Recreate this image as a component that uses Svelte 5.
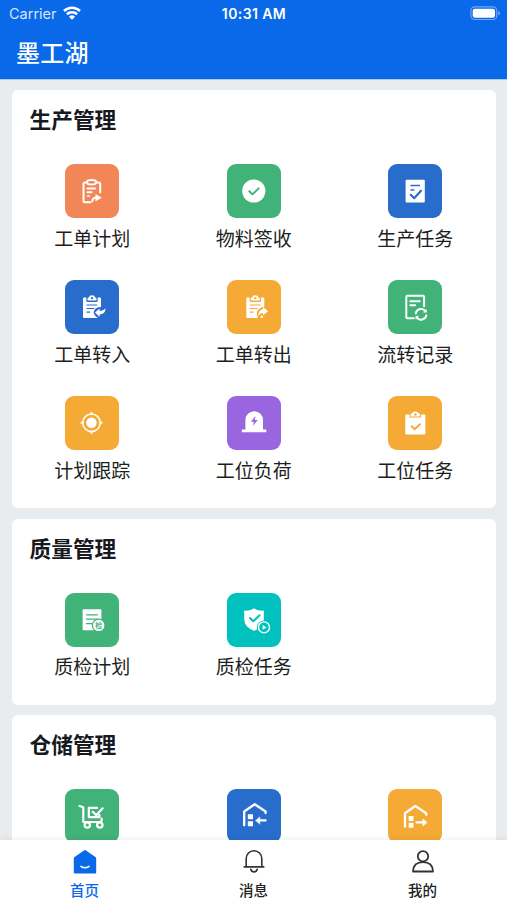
<script>
  const sections = [
    {
      title: '生产管理',
      items: [
        { label: '工单计划', color: '#f38656', icon: 'plan' },
        { label: '物料签收', color: '#42b378', icon: 'check' },
        { label: '生产任务', color: '#286dcb', icon: 'task' },
        { label: '工单转入', color: '#286dcb', icon: 'in' },
        { label: '工单转出', color: '#f5aa35', icon: 'out' },
        { label: '流转记录', color: '#42b378', icon: 'record' },
        { label: '计划跟踪', color: '#f5aa35', icon: 'track' },
        { label: '工位负荷', color: '#9966e0', icon: 'load' },
        { label: '工位任务', color: '#f5aa35', icon: 'station' }
      ]
    },
    {
      title: '质量管理',
      items: [
        { label: '质检计划', color: '#42b378', icon: 'qcplan' },
        { label: '质检任务', color: '#00c1bd', icon: 'qctask' }
      ]
    },
    {
      title: '仓储管理',
      items: [
        { color: '#42b378', icon: 'cart' },
        { color: '#286dcb', icon: 'housein' },
        { color: '#f5aa35', icon: 'houseout' }
      ]
    }
  ];
</script>

{#snippet clipboard(c)}
  <path fill="#fff" stroke="none" d="M19 17.500h2.300v3.200q0 1.200 1.200 1.200h9q1.200 0 1.200-1.200v-3.200H35q1 0 1 1V37q0 1-1 1H19q-1 0-1-1V18.500q0-1 1-1z" />
  <path fill="#fff" stroke="none" d="M22.500 20.500v-1.700q0-1.300 1.300-1.300 .5-2.300 3.200-2.300t3.200 2.300q1.300 0 1.300 1.300v1.700z" />
  <circle cx="27" cy="18.100" r="1.200" fill={c} stroke="none" />
{/snippet}

{#snippet glyph(name, c)}
  <svg viewBox="0 0 54 54" fill="none" stroke="#fff" stroke-width="2" stroke-linecap="round" stroke-linejoin="round">
    {#if name === 'plan'}
      <path d="M21 18.600h-1q-1.500 0-1.500 1.500v16.700q0 1.500 1.500 1.500h5.500M32 18.600h1.700q1.500 0 1.500 1.500v8.400M22.500 24.500h7.500M22.500 28.300h4" />
      <ellipse cx="26.600" cy="18.200" rx="4.700" ry="2.300" />
      <path d="M22.500 32h2" stroke-width="1.500" />
      <path d="M27.300 37.200q.4-3.400 4.200-3.600" />
      <path d="M31 30.700l5.300 3-5.300 3z" fill="#fff" stroke-width=".6" />
    {:else if name === 'check'}
      <circle cx="26.800" cy="27" r="11.600" fill="#fff" stroke="none" />
      <path d="M22.300 27.200l3.200 3.200 6.100-6" stroke={c} />
    {:else if name === 'task'}
      <rect x="17.600" y="15.800" width="19.200" height="22.600" rx="1" fill="#fff" stroke="none" />
      <path d="M23 21.500h8.500M23 26h2.800" stroke={c} stroke-width="1.500" />
      <path d="M22.800 30.800l3.400 3.400 6.800-7.500" stroke={c} stroke-width="2.100" />
    {:else if name === 'in'}
      {@render clipboard(c)}
      <path d="M22 25h9.800M22 28.500h7M22 32.100h2.700" stroke={c} stroke-width="1.200" />
      <path d="M37 27q-7.500-.5-8.400 5.800.8 3 4.600 5.500h4z" fill={c} stroke="none" />
      <path d="M30 32.600l4.600-4v2.400q3.800.2 6-2.800-.2 5.600-6 6.400v2.400z" fill="#fff" stroke="none" />
    {:else if name === 'out'}
      <g transform="translate(1.3)">{@render clipboard(c)}</g>
      <path d="M23.300 25h9.800M23.300 28.500h7M23.300 32.100h2.700" stroke={c} stroke-width="1.200" />
      <path d="M38.500 26.600l-3.500.7q-5.600 2-5 7.200l1 4h7z" fill={c} stroke="none" />
      <path d="M31.300 36q.4-6.800 4.800-6.800v-2.200l5 4.200-5 4.100v-2.200q-2.800-.2-4.800 2.900z" fill="#fff" stroke="none" />
      <circle cx="34.800" cy="36.700" r="1.300" fill="#fff" stroke="none" />
    {:else if name === 'record'}
      <path d="M25.800 38.300h-6.300q-1.200 0-1.200-1.200V17q0-1.200 1.200-1.200h15.400q1.200 0 1.200 1.200v9.300M22.300 21.300h9.300M22.300 25.300h4.800" />
      <path d="M27.800 33.400a5.400 5.400 0 0 1 9.800-2.100M38.400 35.200a5.400 5.400 0 0 1-9.800 2.100" />
      <path d="M38.300 29.700v2.600h-2.600zM27.900 38.900v-2.600h2.600z" fill="#fff" stroke-width=".5" />
    {:else if name === 'track'}
      <circle cx="26.500" cy="26.800" r="5.200" fill="#fff" stroke="none" />
      <circle cx="26.500" cy="26.800" r="8.800" stroke-width="1.600" />
      <path d="M26.500 16.700v1.500M26.500 35.500v1.500M16.400 26.800h1.500M35.200 26.800h1.500" />
    {:else if name === 'load'}
      <path d="M18.400 33.500V24a8.800 8.800 0 0 1 17.600 0v9.500h3.300v2.800H14.800v-2.800z" fill="#fff" stroke="none" />
      <path d="M28.500 20l-4.700 5.700h3l-.8 4.100 4.800-5.900h-3z" fill={c} stroke="none" />
    {:else if name === 'station'}
      <path d="M18.300 18.400h3.200v3h11.700v-3h3.200q1 0 1 1v18q0 1-1 1H18.300q-1 0-1-1v-18q0-1 1-1z" fill="#fff" stroke="none" />
      <path d="M22.500 20.400v-1.600q0-1 1.200-1.200 1-2.200 3.600-2.200t3.600 2.200q1.200.2 1.200 1.200v1.600z" fill="#fff" stroke="none" />
      <circle cx="27.400" cy="18.500" r="1.200" fill={c} stroke="none" />
      <path d="M23.700 30.300l2.900 2.900 5.300-5" stroke={c} />
    {:else if name === 'qcplan'}
      <rect x="17.600" y="16.200" width="18.800" height="21.100" rx="1.200" fill="#fff" stroke="none" />
      <path d="M21.500 21.800h11M21.500 26.200h11M21.500 30.700h5" stroke={c} stroke-width="1.300" />
      <circle cx="33.700" cy="32.400" r="6.300" fill="#fff" stroke={c} stroke-width="1.200" />
      <text x="33.700" y="35" text-anchor="middle" font-size="7" font-weight="700" fill={c} stroke="none">检</text>
    {:else if name === 'qctask'}
      <path d="M27 15.300q3 3 9.800 2.300v9q0 7.500-9.800 11.200-9.800-3.700-9.800-11.200v-9q6.800.7 9.800-2.300z" fill="#fff" stroke="none" />
      <path d="M23 25l3.300 3.300 6.200-6" stroke={c} stroke-width="2" />
      <circle cx="37" cy="34.400" r="7" fill={c} stroke="none" />
      <circle cx="37" cy="34.400" r="5.500" stroke-width="1.400" />
      <path d="M35.600 32v4.800l3.700-2.400z" fill="#fff" stroke="none" />
    {:else if name === 'cart'}
      <path d="M14.500 17l3.200 1q.6.2.6.9V33h16.300q2 0 2-1.700v-1.600" stroke-width="2.200" />
      <path d="M32 18.900h-8.200v9.200h10.600V26M27.700 22.800l3.600 3.500 6.300-7" stroke-width="2.200" />
      <circle cx="22.300" cy="36" r="2.700" fill={c} stroke-width="2.200" />
      <circle cx="34.800" cy="36" r="2.700" fill={c} stroke-width="2.200" />
    {:else if name === 'housein'}
      <path d="M17.200 36.300V22.500l10.500-7.300 10.900 7.300V24" stroke-width="2.300" />
      <path d="M20.800 25.300H26v5h-5.200zM20.800 32.200H26v5h-5.200z" fill="#fff" stroke="none" />
      <path d="M32 31.400h6.600" stroke-width="2.200" />
      <path d="M28.800 31.400l4-3.400v6.800z" fill="#fff" stroke-width=".6" />
    {:else}
      <path d="M17 37.700V24.300L27.300 17l10.900 7.300v1.500" stroke-width="2.300" />
      <path d="M20.700 27h4.800v4.900h-4.800zM20.700 33.800h4.800v4.900h-4.800z" fill="#fff" stroke="none" />
      <path d="M28.500 33.300h6" stroke-width="2.200" />
      <path d="M38.900 33.300l-4-3.400v6.800z" fill="#fff" stroke-width=".6" />
    {/if}
  </svg>
{/snippet}

<div class="app">
  <header>
    <div class="status">
      <div class="carrier">
        <span>Carrier</span>
        <svg width="18" height="14" viewBox="0 0 18 14" fill="none" stroke="#fff" stroke-width="2.600">
          <path d="M1 5a11.600 11.600 0 0 1 16 0M3.900 8.300a7.300 7.300 0 0 1 10.200 0" />
          <path d="M9 13.800L5.900 10.700a4.500 4.500 0 0 1 6.200 0z" fill="#fff" stroke="none" />
        </svg>
      </div>
      <b>10:31 AM</b>
      <svg class="battery" width="31" height="15" viewBox="0 0 31 15">
        <rect x=".9" y=".9" width="25.800" height="12.600" rx="3.800" fill="none" stroke="#73a9f6" stroke-width="1.100" />
        <rect x="2.700" y="2.700" width="22.300" height="9" rx="2.200" fill="#fff" />
        <path d="M28.200 5v4.400q1.800-.6 1.800-2.200T28.200 5z" fill="#73a9f6" />
      </svg>
    </div>
    <h1>墨工湖</h1>
  </header>

  <main>
    {#each sections as section}
      <section>
        <h2>{section.title}</h2>
        <div class="grid">
          {#each section.items as item}
            <div class="item">
              <div class="tile" style="background: {item.color}">{@render glyph(item.icon, item.color)}</div>
              {#if item.label}<span>{item.label}</span>{/if}
            </div>
          {/each}
        </div>
      </section>
    {/each}
  </main>

  <nav>
    <div class="tab active">
      <svg width="26" height="26" viewBox="0 0 26 26">
        <path d="M12 1.400q1-.7 2 0l9.400 6.500q.8.6.8 1.600v14q0 1-1 1H2.800q-1 0-1-1v-14q0-1 .8-1.600z" fill="#0969e8" />
        <path d="M9 17.300q4 2.700 8 0" fill="none" stroke="#fff" stroke-width="1.600" stroke-linecap="round" />
      </svg>
      <span>首页</span>
    </div>
    <div class="tab">
      <svg width="26" height="26" viewBox="0 0 26 26" fill="none" stroke="#333" stroke-width="1.600" stroke-linecap="round">
        <path d="M5.200 17.800V9.500a7.800 7.800 0 0 1 15.600 0v8.300M3.200 17.900h19.600M9.800 20.300q.7 2.600 3.200 2.600t3.200-2.600" />
      </svg>
      <span>消息</span>
    </div>
    <div class="tab">
      <svg width="26" height="26" viewBox="0 0 26 26" fill="none" stroke="#333" stroke-width="1.800" stroke-linejoin="round">
        <circle cx="13" cy="7.300" r="5.200" />
        <path d="M3 22.500q.3-9.300 10-9.300t10 9.300z" />
      </svg>
      <span>我的</span>
    </div>
  </nav>
</div>

<style>
  :global(body) { margin: 0; }
  .app {
    width: 507px; height: 900px; overflow: hidden;
    display: flex; flex-direction: column;
    background: #e9ecef; color: #1c1e21;
    font-family: Inter, "Noto Sans CJK SC", sans-serif;
  }
  header { flex: none; height: 80px; background: #0969e8; color: #fff; border-bottom: 1px solid #a9cbf4; box-sizing: border-box; }
  .status { height: 28px; display: grid; grid-template-columns: 1fr auto 1fr; align-items: center; padding: 0 6px 0 9px; font-size: 14px; line-height: 28px; }
  .carrier { display: flex; align-items: center; gap: 6px; font-size: 14.500px; color: #d5e6ff; }
  .carrier svg { margin-top: -2px; }
  .status b { font-weight: 600; font-size: 14px; letter-spacing: .4px; margin-right: 2px; }
  .battery { justify-self: end; margin-top: -1px; }
  h1 { margin: 8px 0 0 16px; font-size: 24px; line-height: 36px; font-weight: 500; letter-spacing: .3px; }
  main { flex: 1; min-height: 0; overflow: hidden; display: flex; flex-direction: column; gap: 10.600px; padding: 10px 11px 0 11.500px; }
  section { flex: none; background: #fff; border-radius: 6px; padding: 15px 0 20px; }
  h2 { margin: 0 0 29px 18px; font-size: 21.700px; line-height: 30px; font-weight: 700; color: #16191f; }
  .grid { display: grid; grid-template-columns: repeat(3, 1fr); row-gap: 24px; }
  .item { height: 92px; display: flex; flex-direction: column; align-items: center; font-size: 19px; line-height: 28px; }
  .item > span { margin-top: 7.500px; }
  .tile { width: 54px; height: 54px; border-radius: 9px; flex: none; }
  .tile svg { display: block; width: 54px; height: 54px; }
  nav { flex: none; height: 60px; position: relative; background: #fff; display: grid; grid-template-columns: repeat(3, 1fr); box-shadow: 0 -2px 5px rgba(0, 0, 0, .05); }
  .tab { display: flex; flex-direction: column; align-items: center; padding-top: 9px; font-size: 14.500px; font-weight: 500; line-height: 20px; color: #222; }
  .tab span { margin-top: 6px; }
  .active { color: #0969e8; }
</style>
